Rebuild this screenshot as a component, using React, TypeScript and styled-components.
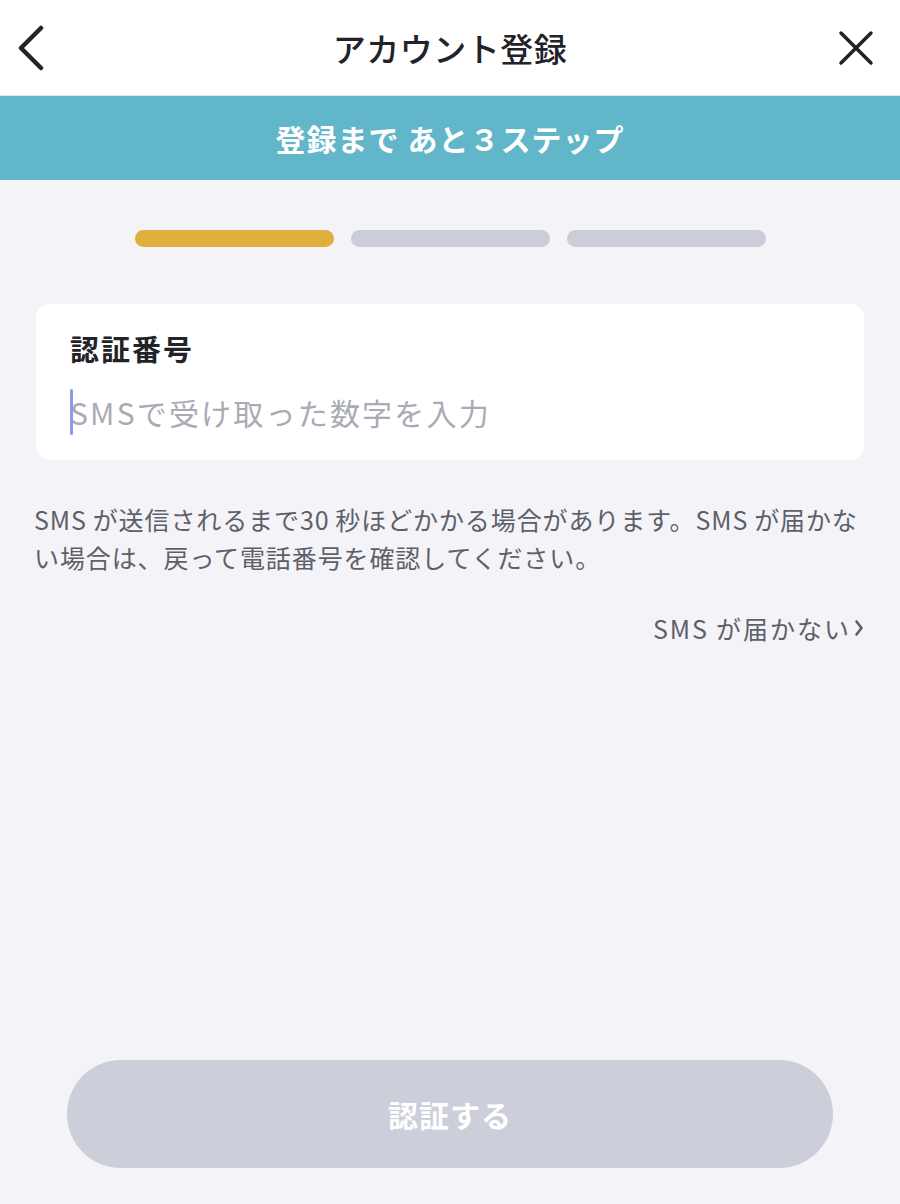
import React from "react";
import styled, { createGlobalStyle } from "styled-components";

const Global = createGlobalStyle`
  html, body { margin: 0; padding: 0; background: #f4f4f8; }
  body { font-family: "Noto Sans CJK JP", "Noto Sans", sans-serif; -webkit-font-smoothing: antialiased; }
  * { box-sizing: border-box; }
`;

const Page = styled.div`
  width: 900px;
  height: 1204px;
  display: flex;
  flex-direction: column;
  background: #f4f4f8;
`;

const Header = styled.header`
  height: 96px;
  background: #fff;
  display: grid;
  grid-template-columns: 80px 1fr 80px;
  align-items: center;
  border-bottom: 1px solid #dfe6ea;
`;

const IconButton = styled.button<{ $side: "left" | "right" }>`
  border: none;
  background: none;
  padding: 0;
  height: 60px;
  display: flex;
  align-items: center;
  justify-content: ${(p) => (p.$side === "left" ? "flex-start" : "flex-end")};
  padding-left: ${(p) => (p.$side === "left" ? "14px" : "0")};
  padding-right: ${(p) => (p.$side === "right" ? "26px" : "0")};
  color: #222328;
`;

const Title = styled.h1`
  margin: 0;
  text-align: center;
  font-size: 33px;
  font-weight: 500;
  color: #222328;
  letter-spacing: 0.5px;
`;

const Banner = styled.div`
  height: 84px;
  background: #62b6ca;
  display: flex;
  align-items: center;
  justify-content: center;
  color: #fff;
  font-size: 30px;
  font-weight: 700;
  letter-spacing: 1px;
`;

const Body = styled.main`
  flex: 1;
  display: flex;
  flex-direction: column;
  padding: 50px 34px 0 34px;
`;

const Steps = styled.div`
  display: flex;
  justify-content: center;
  gap: 17px;
`;

const Step = styled.div<{ $active?: boolean }>`
  width: 199px;
  height: 17px;
  border-radius: 9px;
  background: ${(p) => (p.$active ? "#e0ae3c" : "#cbcdd8")};
`;

const Card = styled.section`
  margin: 57px 2px 0 2px;
  background: #fff;
  border-radius: 14px;
  padding: 24px 34px 24px 34px;
  display: flex;
  flex-direction: column;
  gap: 20px;
`;

const Label = styled.div`
  font-size: 29px;
  font-weight: 700;
  color: #222328;
  line-height: 40px;
  letter-spacing: 2px;
`;

const InputRow = styled.div`
  position: relative;
  display: flex;
  align-items: center;
  height: 48px;
`;

const Caret = styled.span`
  position: absolute;
  left: 0;
  top: 1px;
  width: 3px;
  height: 46px;
  border-radius: 2px;
  background: #8b99ef;
`;

const Input = styled.input`
  border: none;
  outline: none;
  background: transparent;
  width: 100%;
  font-family: inherit;
  font-size: 30px;
  letter-spacing: 2.2px;
  color: #222328;
  padding: 0;
  &::placeholder { color: #a9abb5; }
`;

const Note = styled.p`
  margin: 40px 0 0;
  font-size: 25px;
  line-height: 38px;
  color: #5e6068;
  letter-spacing: 0.9px;
`;

const HelpLink = styled.a`
  align-self: flex-end;
  margin-top: 34px;
  margin-right: 2px;
  font-size: 25px;
  letter-spacing: 2px;
  color: #5e6068;
  display: flex;
  align-items: center;
  gap: 3px;
  text-decoration: none;
`;

const Footer = styled.footer`
  display: flex;
  justify-content: center;
  padding-bottom: 36px;
`;

const SubmitButton = styled.button`
  width: 766px;
  height: 108px;
  border: none;
  border-radius: 54px;
  background: #cccfda;
  color: #fff;
  font-family: inherit;
  font-size: 30px;
  font-weight: 700;
  letter-spacing: 1px;
`;

const noteText =
  "SMS\u2009が送信されるまで30\u2009秒ほどかかる場合があります。SMS\u2009が届かない場合は、戻って電話番号を確認してください。";

export default function App() {
  return (
    <Page>
      <Global />
      <Header>
        <IconButton $side="left" aria-label="戻る">
          <svg width="34" height="46" viewBox="0 0 34 46" fill="none">
            <path d="M27 3 L7 23 L27 43" stroke="#222328" strokeWidth="4.5" strokeLinecap="round" strokeLinejoin="round" />
          </svg>
        </IconButton>
        <Title>アカウント登録</Title>
        <IconButton $side="right" aria-label="閉じる">
          <svg width="36" height="36" viewBox="0 0 36 36" fill="none">
            <path d="M3 3 L33 33 M33 3 L3 33" stroke="#222328" strokeWidth="3.5" strokeLinecap="round" />
          </svg>
        </IconButton>
      </Header>
      <Banner>登録まで あと３ステップ</Banner>
      <Body>
        <Steps>
          <Step $active />
          <Step />
          <Step />
        </Steps>
        <Card>
          <Label>認証番号</Label>
          <InputRow>
            <Caret />
            <Input placeholder="SMSで受け取った数字を入力" />
          </InputRow>
        </Card>
        <Note>{noteText}</Note>
        <HelpLink href="#">
          <span>{"SMS\u2009が届かない"}</span>
          <svg width="10" height="18" viewBox="0 0 10 18" fill="none">
            <path d="M2.5 2.5 L7.5 9 L2.5 15.5" stroke="#5e6068" strokeWidth="2.6" strokeLinecap="round" strokeLinejoin="round" />
          </svg>
        </HelpLink>
      </Body>
      <Footer>
        <SubmitButton disabled>認証する</SubmitButton>
      </Footer>
    </Page>
  );
}
